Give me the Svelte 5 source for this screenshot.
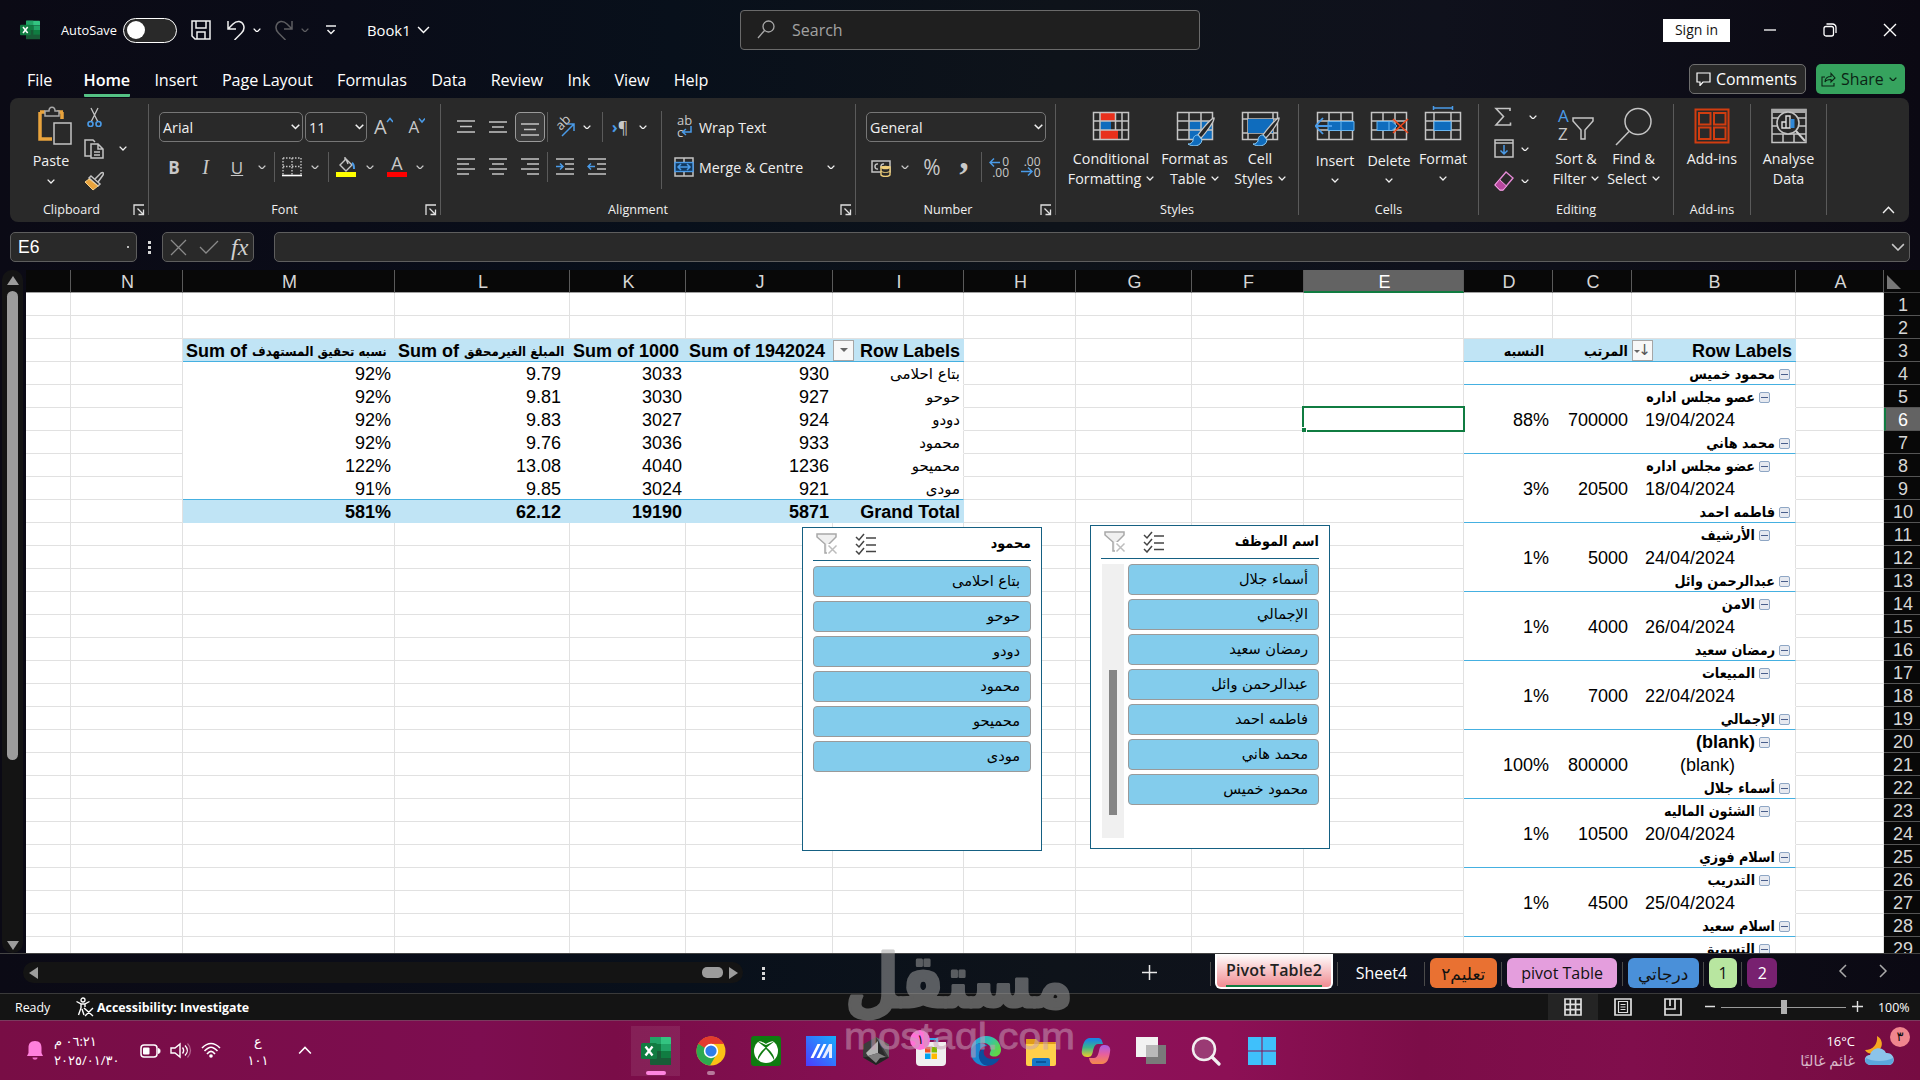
<script lang="ts">
  type Cell = { t: string; cls?: string; minus?: boolean; filter?: 'any' | 'sorted' }

  const tabs = ['File', 'Home', 'Insert', 'Page Layout', 'Formulas', 'Data', 'Review', 'Ink', 'View', 'Help']
  const cols = ['', 'N', 'M', 'L', 'K', 'J', 'I', 'H', 'G', 'F', 'E', 'D', 'C', 'B', 'A']
  const rows = Array.from({ length: 29 }, (_, i) => i + 1)

  const summary = [
    ['بتاع احلامى', '930', '3033', '9.79', '92%'],
    ['حوحو', '927', '3030', '9.81', '92%'],
    ['دودو', '924', '3027', '9.83', '92%'],
    ['محمود', '933', '3036', '9.76', '92%'],
    ['محميحو', '1236', '4040', '13.08', '122%'],
    ['مودى', '921', '3024', '9.85', '91%'],
  ]

  const staff = [
    ['محمود خميس', 'عصو مجلس اداره', '19/04/2024', '700000', '88%'],
    ['محمد هاني', 'عضو مجلس اداره', '18/04/2024', '20500', '3%'],
    ['فاطمه احمد', 'الأرشيف', '24/04/2024', '5000', '1%'],
    ['عبدالرحمن وائل', 'الامن', '26/04/2024', '4000', '1%'],
    ['رمضان سعيد', 'المبيعات', '22/04/2024', '7000', '1%'],
    ['الإجمالي', '(blank)', '(blank)', '800000', '100%'],
    ['أسماء جلال', 'الشئون الماليه', '20/04/2024', '10500', '1%'],
    ['اسلام فوزي', 'التدريب', '25/04/2024', '4500', '1%'],
    ['اسلام سعيد', 'التسويق', '', '', ''],
  ]

  const cells: Record<string, Cell> = {
    M3: { t: 'Sum of نسبه تحقيق المستهدف', cls: 'head' },
    L3: { t: 'Sum of المبلغ الغيرمحقق', cls: 'head' },
    K3: { t: 'Sum of 1000', cls: 'head' },
    J3: { t: 'Sum of 1942024', cls: 'head' },
    I3: { t: 'Row Labels', cls: 'bold', filter: 'any' },
    M10: { t: '581%', cls: 'bold' },
    L10: { t: '62.12', cls: 'bold wide' },
    K10: { t: '19190', cls: 'bold' },
    J10: { t: '5871', cls: 'bold' },
    I10: { t: 'Grand Total', cls: 'bold' },
    D3: { t: 'النسبه', cls: 'bold wide' },
    C3: { t: 'المرتب', cls: 'bold' },
    B3: { t: 'Row Labels', cls: 'bold', filter: 'sorted' },
  }
  summary.forEach((r, i) => {
    ;['I', 'J', 'K', 'L', 'M'].forEach((c, j) => (cells[c + (i + 4)] = { t: r[j], cls: c === 'L' ? 'wide' : '' }))
  })
  staff.forEach((r, i) => {
    const n = 4 + i * 3
    cells['B' + n] = { t: r[0], cls: 'bold lvl0', minus: true }
    cells['B' + (n + 1)] = { t: r[1], cls: 'bold lvl1', minus: true }
    cells['B' + (n + 2)] = { t: r[2], cls: 'lvl2' }
    cells['C' + (n + 2)] = { t: r[3] }
    cells['D' + (n + 2)] = { t: r[4] }
  })

  function look(c: string, r: number) {
    let s = ''
    if ('MLKJI'.includes(c) && c && r >= 3 && r <= 10) {
      s = r === 3 || r === 10 ? 'fill' : 'bare'
      if (r === 3 || r === 9) s += ' rule'
      if (c === 'I') s += ' last'
    } else if ('DCB'.includes(c) && c && r >= 3) {
      s = r === 3 ? 'fill' : 'bare'
      if (r === 3 || r % 3 === 1) s += ' rule'
      if (c === 'B') s += ' last'
    }
    return s
  }

  // split a label so arabic runs get their own face and size
  const runs = (t: string) => t.split(/([\u0600-\u06ff][\u0600-\u06ff ]*)/).filter(Boolean)
  const isAr = (t: string) => /[\u0600-\u06ff]/.test(t)

  const slicerA = ['بتاع احلامى', 'حوحو', 'دودو', 'محمود', 'محميحو', 'مودى']
  const slicerB = ['أسماء جلال', 'الإجمالي', 'رمضان سعيد', 'عبدالرحمن وائل', 'فاطمه احمد', 'محمد هاني', 'محمود خميس']

  const sheets = [
    { t: 'Pivot Table2', cls: 'active' },
    { t: 'Sheet4', cls: 'nocolor' },
    { t: 'تعليم٢', cls: 'orange' },
    { t: 'pivot Table', cls: 'pink' },
    { t: 'درجاتي', cls: 'blue' },
    { t: '1', cls: 'green' },
    { t: '2', cls: 'purple' },
  ]

  const g = 'fill="none" stroke="#c4c4c4" stroke-width="1.5"'
  const b = 'fill="none" stroke="#4a9be8" stroke-width="1.5"'
  const lines = (a: number[][]) => `<path ${g} d="${a.map(([x1, x2, y]) => `M${x1} ${y}H${x2}`).join('')}"/>`
  const brush = '<path d="M39 12c-3 0-14 14-16 17l3 3c3-3 14-17 13-20z" fill="#262626" stroke="#c8c8c8" stroke-width="1.3"/><path d="M23 29c-4 0-5 3-5 6-1 2-3 3-5 3 4 3 13 3 14-4z" fill="#0f6cbd" stroke="#8ccbf5"/>'

  const icons: Record<string, string> = {
    excel: '<path d="M10 1h19a1 1 0 0 1 1 1v6H9z" fill="#33c481"/><path d="M9 1h11v7H9z" fill="#21a366"/><path d="M9 8h11v7H9z" fill="#107c41"/><path d="M20 8h10v7H20z" fill="#21a366"/><path d="M9 15h21v14H10a1 1 0 0 1-1-1z" fill="#185c37"/><path d="M20 15h10v7H20z" fill="#107c41"/><rect x="0" y="7" width="16" height="16" rx="1.5" fill="#107c41"/><path d="M4.5 10.5l7 9M11.5 10.5l-7 9" stroke="#fff" stroke-width="2.3"/>',
    save: '<path d="M1 1h18v18H4l-3-3zM5 1v7h10V1M6 19v-7h8v7" fill="none" stroke="#f0f0f0" stroke-width="1.5"/>',
    undo: '<path d="M2 1v8h8M2 9l5-5c4-4 9-3 10.5 1s0 6-2 8l-7 7" fill="none" stroke="#f0f0f0" stroke-width="1.5"/>',
    redo: '<path d="M18 1v8h-8M18 9l-5-5C9 0 4 1 2.5 5s0 6 2 8l7 7" fill="none" stroke="#5d5d61" stroke-width="1.5"/>',
    custom: '<path d="M1 2h10M2.5 6L6 9.5 9.5 6" fill="none" stroke="#f0f0f0" stroke-width="1.5"/>',
    search: '<circle cx="11.5" cy="6.5" r="5.5" fill="none" stroke="#a8a8a8" stroke-width="1.3"/><path d="M7.5 10.5L1 18" stroke="#a8a8a8" stroke-width="1.3"/>',
    min: '<path d="M1 7h12" stroke="#fff" stroke-width="1.3"/>',
    restore: '<rect x="1" y="3.5" width="9.5" height="9.5" rx="2" fill="none" stroke="#fff" stroke-width="1.3"/><path d="M3.5 1h6a3.5 3.5 0 0 1 3.5 3.5v5.5" fill="none" stroke="#fff" stroke-width="1.3"/>',
    close: '<path d="M1 1l12 12M13 1L1 13" stroke="#fff" stroke-width="1.4"/>',
    comment: '<path d="M1 1h13v9H7l-3 3.5V10H1z" fill="none" stroke="#fff" stroke-width="1.2"/>',
    share: '<path d="M4 5H1v9h12v-3M4 10c0-4 3-5.5 6-5.5V1.5L14 6l-4 4V7.5C7 7.5 5 8 4 10z" fill="none" stroke="#0b2415" stroke-width="1.1"/>',
    paste: '<path d="M5 6v27h12M27 6v7M5 6h5M22 6h6" fill="none" stroke="#e8a33d" stroke-width="3.5"/><path d="M10 10V5h4c0-5 6-5 6 0h4v5z" fill="#292929" stroke="#a9a9a9" stroke-width="1.5"/><rect x="19" y="17" width="17" height="21" fill="#292929" stroke="#c4c4c4" stroke-width="1.5"/>',
    cut: '<path d="M5 1l7 14M12 1L5 15" stroke="#c4c4c4" stroke-width="1.3"/><circle cx="4.5" cy="17" r="2.5" fill="none" stroke="#4a9be8" stroke-width="1.6"/><circle cx="12.5" cy="17" r="2.5" fill="none" stroke="#4a9be8" stroke-width="1.6"/>',
    copy: `<path ${g} d="M7 17H1V1h8l2 2M7 5h7l5 5v9H7zM14 5v5h5M10 13h6M10 16h6"/>`,
    painter: '<path d="M11 8l6-6c2-1 3 0 2 2l-5 7" fill="none" stroke="#c4c4c4" stroke-width="1.5"/><path d="M7 5l9 8-2 2-9-8z" fill="none" stroke="#c4c4c4" stroke-width="1.5"/><path d="M5 8L1 11l8 8 5-4z" fill="#e8a33d" stroke="#f5d08a"/>',
    grow: '<path d="M14 5l3-3.5L20 5" fill="none" stroke="#4a9be8" stroke-width="1.5"/>',
    shrink: '<path d="M14 1.5L17 5l3-3.5" fill="none" stroke="#4a9be8" stroke-width="1.5"/>',
    border: '<path d="M1 1h18M1 1v17M19 1v17M10 1v17M1 9.5h18" fill="none" stroke="#c4c4c4" stroke-dasharray="1.5 1.5" stroke-width="1.4"/><path d="M0 18.5h20" stroke="#fff" stroke-width="1.6"/>',
    bucket: '<path d="M4 8l6-6 6 6-6 6zM9 3V0M10 2l2 5" fill="none" stroke="#c4c4c4" stroke-width="1.4"/><path d="M16 6c2 1 2 4 2 6" stroke="#4a9be8" stroke-width="2" fill="none"/><path d="M0 15h20v5H0z" fill="#ff0"/>',
    color: '<path d="M0 15h20v5H0z" fill="#f00"/>',
    top: lines([[1, 19, 4], [4, 16, 9.5], [1, 19, 15]]),
    mid: lines([[1, 19, 5], [4, 16, 10], [1, 19, 15]]),
    bot: lines([[1, 19, 7], [4, 16, 12.5], [1, 19, 18]]),
    left: lines([[1, 19, 2], [1, 13, 7], [1, 19, 12], [1, 13, 17]]),
    center: lines([[1, 19, 2], [4, 16, 7], [1, 19, 12], [4, 16, 17]]),
    right: lines([[1, 19, 2], [7, 19, 7], [1, 19, 12], [7, 19, 17]]),
    indent: lines([[1, 19, 2], [10, 19, 7], [10, 19, 12], [1, 19, 17]]) + `<path ${b} d="M1 9.5h7M5 6.5l3 3-3 3"/>`,
    outdent: lines([[1, 19, 2], [10, 19, 7], [10, 19, 12], [1, 19, 17]]) + `<path ${b} d="M8 9.5H1M4 6.5l-3 3 3 3"/>`,
    orient: `<path ${b} d="M7 19L19 7M12 7h7v7"/>`,
    wrap: `<path ${b} d="M17 9v6H9M12 12l-3.5 3 3.5 3"/>`,
    merge: `<rect x="1" y="1" width="18" height="18" ${g}/><path ${g} d="M10 1v4M10 15v4"/><rect x="1" y="5.5" width="18" height="9" fill="#12395e" stroke="#4a9be8" stroke-width="1.4"/><path ${b} d="M4 10h12M7 7l-3 3 3 3M13 7l3 3-3 3"/>`,
    money: `<rect x="1" y="4" width="18" height="11" ${g}/><path ${g} d="M7 7c-4-1-4 6 0 5M13 7c-4-1-4 6 0 5"/><path d="M10 10v8c2 2 7 2 9 0v-8z" fill="#292929" stroke="#f0cf7a" stroke-width="1.4"/><ellipse cx="14.5" cy="10.5" rx="4.5" ry="1.8" fill="#f0cf7a"/><path d="M10 14c2 2 7 2 9 0" fill="none" stroke="#f0cf7a"/>`,
    inc: `<path ${b} d="M11 5.5H1M5 1.5L1 5.5l4 4"/>`,
    dec: `<path ${b} d="M0 14.5h11M7 10.5l4 4-4 4"/>`,
    cf: `<path d="M9 6.5h16V15H9zM9 24h18v9.5H9z" fill="#e8301c"/><path d="M9 15h11v9H9z" fill="#0f6cbd"/><path ${g} d="M2.5 6.5h35v27h-35zM9 6.5v27M31 6.5v27M24.5 6.5V24M2.5 15h35M2.5 24h35"/>`,
    fat: `<path d="M14 15h24v19H14z" fill="#0f6cbd"/><path ${g} d="M2.5 6.5h35v27h-35zM14 6.5v27M26 6.5v27M2.5 15h35M2.5 24h35"/>${brush}`,
    cell: `<path ${g} d="M2.5 6.5h35v27h-35zM2.5 13h35M2.5 27h35M8 6.5v27M33 6.5v27"/><path d="M8 13h25v14H8z" fill="#0f6cbd"/>${brush}`,
    insert: `<path ${g} d="M2.5 6.5h35v27h-35zM14 6.5v27M26 6.5v27M2.5 15h35M2.5 24h35"/><path d="M13 15.5h26v9H13z" fill="#0f6cbd" stroke="#69b6f0"/><path d="M26 15v10" stroke="#69b6f0"/><path d="M8 12l-7.5 8L8 28M1 20h16" fill="none" stroke="#4a9be8" stroke-width="1.8"/>`,
    del: `<path ${g} d="M2.5 6.5h35v27h-35zM14 6.5v27M26 6.5v27M2.5 15h35M2.5 24h35"/><path d="M8 15.5h15l5 4.5-5 4.5H8z" fill="#0f6cbd" stroke="#69b6f0"/><path d="M20 15v10" stroke="#69b6f0"/><path d="M24 13l15 14M39 13L24 27" stroke="#f0481c" stroke-width="1.6"/>`,
    format: `<path ${g} d="M2.5 6.5h35v27h-35zM11 6.5v27M28 6.5v27M2.5 15h35M2.5 24h35"/><path d="M11 15.5h17v9H11z" fill="#0f6cbd" stroke="#69b6f0"/><path ${b} d="M10.5 2h19M10.5 0v4M29.5 0v4"/>`,
    sigma: '<path d="M16 4V1.5H2L9.5 9.5 2 18h14.5v-2.5" fill="none" stroke="#c4c4c4" stroke-width="1.6"/>',
    down: `<path ${g} d="M1 1h18v17H1zM1 4h18"/><path ${b} d="M10 6v9M6.5 11.5L10 15l3.5-3.5"/>`,
    eraser: '<path d="M12 1l7 6-10 12H6l-5-5z" fill="none" stroke="#e58ad6" stroke-width="1.4"/><path d="M5.5 8.5l7 6.5L9 19H6l-5-5z" fill="#b8489f" stroke="#f0a0e0"/>',
    sort: `<path ${g} d="M17 12h20v3l-8 9v9h-4v-9l-8-9z"/>`,
    find: `<circle cx="24" cy="15.5" r="13" ${g}/><path ${g} d="M15 25.5L2 39"/>`,
    addins: '<path d="M3.5 3.5h33v33h-33zM7 7h11.5v11.5H7zM22 7h11.5v11.5H22zM7 21.5h11.5V33H7zM22 21.5h11.5V33H22z" fill="none" stroke="#d13d10" stroke-width="2"/>',
    analyse: `<path ${g} d="M3 3.5h34v33H3zM3 28h34M3 20h34M3 12h34M14 28v8M25 28v8"/><path d="M3 3h34v4H3z" fill="#a8a8a8"/><circle cx="19" cy="17" r="11" fill="#292929" stroke="#c4c4c4" stroke-width="1.6"/><path d="M27 25l9 10" stroke="#d0d0d0" stroke-width="2"/><path d="M17 10h4v12h-4zM13 16h4v6h-4z" fill="none" stroke="#e0e0e0" stroke-width="1.4"/><path d="M21.5 13h4v9h-4z" fill="#2f88d8"/>`,
    x: '<path d="M1 1l15 15M16 1L1 16" stroke="#8a8a8a" stroke-width="1.3"/>',
    check: '<path d="M1 8l6 6L19 2" fill="none" stroke="#8a8a8a" stroke-width="1.3"/>',
    access: '<circle cx="8" cy="3" r="2" fill="none" stroke="#fff" stroke-width="1.3"/><path d="M1.5 4.5L6 7v4L3.5 18M14.5 4.5L10 7v3M6 7h4M7 12l2 6M9 11l9 8M18 11l-8 8" fill="none" stroke="#fff" stroke-width="1.4"/>',
    normal: '<path d="M1 1h16v16H1zM1 6.3h16M1 11.6h16M6.3 1v16M11.6 1v16" fill="none" stroke="#e0e0e0" stroke-width="1.7"/>',
    page: '<path d="M1 1h16v16H1z" fill="none" stroke="#e0e0e0" stroke-width="1.7"/><path d="M4.5 3.5h9v11h-9zM6.5 6.5h5M6.5 9h5M6.5 11.5h5" fill="none" stroke="#e0e0e0" stroke-width="1.2"/>',
    brk: '<path d="M1 1h16v16H1zM1 11h10V1M6 1v7" fill="none" stroke="#e0e0e0" stroke-width="1.7"/>',
    funnel: '<path d="M1 1h19v3l-7 7v9H9v-9L1 4z" fill="#f0f0f0" stroke="#a8a8a8" stroke-width="1.5"/><path d="M11 11h10v10H11z" fill="#fff"/><path d="M12.5 12.5l8 8M20.5 12.5l-8 8" stroke="#bdbdbd" stroke-width="1.5"/>',
    multi: '<path d="M1 4l3 3 5-6M1 11l3 3 5-6M1 18l3 3 5-6M11 5h10M11 12h10M11 18.5h10" fill="none" stroke="#444" stroke-width="1.5"/>',
    bell: '<path d="M9 1c5 0 6.5 3 6.5 7v5L17 16H1l1.5-3V8C2.5 4 4 1 9 1z" fill="#ff80dc"/><path d="M6.5 17.5h5c0 3-5 3-5 0z" fill="#f06cc8"/>',
    battery: '<rect x="1" y="2" width="16" height="12" rx="3" fill="none" stroke="#fff" stroke-width="1.5"/><rect x="3" y="4.5" width="6.5" height="7" rx="1" fill="#fff"/><path d="M18.5 5.5c2 0 2 5 0 5z" fill="#fff" stroke="#fff"/>',
    sound: '<path d="M1 6v5h4l5 4V2L5 6z" fill="none" stroke="#fff" stroke-width="1.4"/><path d="M12.5 5.5c1.5 2 1.5 4 0 6M15 3.5c3 3 3 7 0 10" fill="none" stroke="#fff" stroke-width="1.4"/><path d="M17.5 1.5c4 4 4 10 0 14" fill="none" stroke="#b0608c" stroke-width="1.3"/>',
    wifi: '<path d="M1 6c6-6 12-6 18 0M3.5 9c5-5 8-5 13 0M6 12c3-3.5 5-3.5 8 0" fill="none" stroke="#fff" stroke-width="1.6"/><circle cx="10" cy="14" r="1.8" fill="#fff"/>',
    weather: '<path d="M13 0c6 3 8 13-3 17-5 1-7 0-9-3 8 0 13-6 12-14z" fill="#f6a821"/><path d="M7 29c-8 0-8-10-1-10 2-8 13-9 16-2 9-1 11 12 2 12z" fill="#8cc4ea"/><path d="M7 29c-5 0-7-4-5-7 6 4 20 4 27 0 1 4-1 7-5 7z" fill="#5ba7dd"/>',
    chrome: '<circle cx="15" cy="15" r="14.5" fill="#fbc116"/><path d="M15 15L2.4 7.8A14.5 14.5 0 0 1 27.6 7.8H15z" fill="#e33b2e"/><path d="M15 15L2.4 7.8A14.5 14.5 0 0 0 14 29.5l7-12z" fill="#2da94f"/><path d="M2.4 7.8A14.5 14.5 0 0 1 27.6 7.8H15a7 7 0 0 0-6.5 4z" fill="#e33b2e"/><circle cx="15" cy="15" r="7.2" fill="#fff"/><circle cx="15" cy="15" r="5.6" fill="#2f7de9"/>',
    xbox: '<rect width="30" height="30" rx="3" fill="#0f7b10"/><circle cx="15" cy="15" r="12" fill="#fff"/><path d="M7 5c4 0 8 3 8 3s4-3 8-3c-4-4-12-4-16 0zM15 11c6 5 9 10 8 13-2-4-5-8-8-11-3 3-6 7-8 11-1-3 2-8 8-13z" fill="#0f7b10"/><path d="M6 5l9 7 9-7-9 4z" fill="#0f7b10"/>',
    armoury: '<defs><linearGradient id="mb" x1="1" y1="0" x2="0" y2="1"><stop offset="0" stop-color="#16aefc"/><stop offset="1" stop-color="#4d3bff"/></linearGradient></defs><rect width="30" height="30" fill="url(#mb)"/><path d="M4.5 22l7-14h3l-7 14zM10.5 22l7-14h3l-7 14z" fill="#fff"/><path d="M16 22l7-14h3v14h-3v-7l-4 7z" fill="#e6ecff"/>',
    cube: '<path d="M15 1l13 7.5v13L15 29 2 21.5v-13z" fill="#3c3c3c"/><path d="M15 1l13 7.5v13L22 12z" fill="#6a6a6a"/><path d="M2 21.5L15 29l13-7.5-13-2z" fill="#232323"/><path d="M17 5L5 17l2 3 10-3z" fill="#b4b4b4"/><path d="M17 5v12l8 4z" fill="#2a2a2a"/><path d="M7 20l10-3 8 4-6 1-4 5z" fill="#808080"/>',
    store: '<path d="M9 8V3h12v5" fill="none" stroke="#35a7ec" stroke-width="2.2"/><path d="M0 6h30v20a4 4 0 0 1-4 4H4a4 4 0 0 1-4-4z" fill="#f0eef0"/><path d="M9 11h5.5v5.5H9z" fill="#f25022"/><path d="M15.5 11H21v5.5h-5.5z" fill="#7fba00"/><path d="M9 17.5h5.5V23H9z" fill="#00a4ef"/><path d="M15.5 17.5H21V23h-5.5z" fill="#ffb900"/>',
    edge: '<defs><linearGradient id="ed" x1="0" y1="0" x2="1" y2=".5"><stop offset=".2" stop-color="#2aa5dc"/><stop offset=".6" stop-color="#34c3a8"/><stop offset="1" stop-color="#5fd64a"/></linearGradient></defs><path d="M0 14C1-4 28-5 30 13c.5 8-8 9-11 6-1-2 1-3 1-6 0-5-9-9-15-4-3 2-4 4-5 5z" fill="url(#ed)"/><path d="M0 15C2 7 12 5 16 10c-6 0-9 5-7 11 2 5 6 8 8 9C6 31-1 23 0 15z" fill="#1b86d0"/><path d="M14 12c-4 6 1 14 15 10-4 7-11 9-16 7-7-4-7-15 1-17z" fill="#0c4f9e"/>',
    folder: '<path d="M0 3h10l3 3h17v6H0z" fill="#e09c1a"/><path d="M0 8h30v20a2 2 0 0 1-2 2H2a2 2 0 0 1-2-2z" fill="#ffcf4a"/><path d="M6 30v-6a2 2 0 0 1 2-2h14a2 2 0 0 1 2 2v6z" fill="#1778c8"/><path d="M10 25h10v2H10z" fill="#0a559c"/>',
    copilot: '<defs><linearGradient id="ca" x1="0" y1="0" x2="0" y2="1"><stop offset=".1" stop-color="#1c86e0"/><stop offset=".5" stop-color="#3bb58a"/><stop offset="1" stop-color="#f2cb2a"/></linearGradient><linearGradient id="cb" x1="0" y1="0" x2="0" y2="1"><stop offset="0" stop-color="#a95be6"/><stop offset=".5" stop-color="#e8609c"/><stop offset="1" stop-color="#f58a4a"/></linearGradient></defs><path d="M9 2h8c3 0 4 2 5 6h-5c-3 0-4 3-5 7-1 5-2 6-6 6-4 0-6-3-5-7C2 7 4 2 9 2z" fill="url(#ca)"/><path d="M21 28h-8c-3 0-4-2-5-6h5c3 0 4-3 5-7 1-5 2-6 6-6 4 0 6 3 5 7-1 7-3 12-8 12z" fill="url(#cb)"/>',
    taskview: '<rect x="10" y="9" width="20" height="19" fill="#7a7a7a"/><rect x="0" y="1" width="22" height="20" fill="#f2f2f2"/><path d="M10 9h12v12H10z" fill="#b9b9b9"/>',
    lens: '<circle cx="13" cy="13" r="11" fill="#9a3a74" stroke="#f2eef0" stroke-width="2.5"/><path d="M21 21l7 7" stroke="#f2eef0" stroke-width="3.2" stroke-linecap="round"/>',
    windows: '<path d="M1 1h13.5v13.5H1zM15.5 1H29v13.5H15.5zM1 15.5h13.5V29H1zM15.5 15.5H29V29H15.5z" fill="#3fc0fb"/>',
  }
  const dock = ['excel', 'chrome', 'xbox', 'armoury', 'cube', 'store', 'edge', 'folder', 'copilot', 'taskview', 'lens', 'windows']
</script>

{#snippet icon(name: string, w: number, h: number)}
  <svg class="ico" width={w} height={h} viewBox="0 0 {w} {h}">{@html icons[name]}</svg>
{/snippet}

{#snippet chev(w = 9, up = false)}
  <svg class="chev" width={w} height={w * 0.62} viewBox="0 0 10 6.2"><path d={up ? 'M.8 5.4L5 1l4.2 4.4' : 'M.8.8L5 5 9.2.8'} fill="none" stroke="currentColor" stroke-width={w > 10 ? 1.1 : 1.7} /></svg>
{/snippet}

{#snippet label(text: string, launcher = true)}
  <div class="label" class:launcher>
    <span>{text}</span>
    {#if launcher}
      <svg width="12" height="12" viewBox="0 0 12 12"><path d="M1 11V1h10M4.5 4.5l6 6M10.5 5.5v5h-5" fill="none" stroke="#e0e0e0" stroke-width="1.3" /></svg>
    {/if}
  </div>
{/snippet}

{#snippet big(name: string, a: string, bb: string, drop = true)}
  <div class="big">
    {@render icon(name, 40, 40)}
    <span>{a}</span>
    <span>{bb}{#if drop}<i>{@render chev(8)}</i>{/if}</span>
  </div>
{/snippet}

{#snippet mixed(t: string)}
  {#each runs(t) as run}{#if isAr(run)}<span class="ar">{run}</span>{:else}{run}{/if}{/each}
{/snippet}

{#snippet slicer(title: string, items: string[], scroll: boolean)}
  <div class="slicer-head">
    {@render icon('funnel', 22, 22)}
    {@render icon('multi', 22, 22)}
    <b class="ar">{title}</b>
  </div>
  <div class="slicer-body">
    {#if scroll}<div class="slicer-track"><div class="slicer-thumb"></div></div>{/if}
    <div class="slicer-items">
      {#each items as it}<div class="slicer-item ar">{it}</div>{/each}
    </div>
  </div>
{/snippet}

<div class="app">
  <header class="title">
    <span class="logo"><svg width="20" height="20" viewBox="0 0 30 30">{@html icons.excel}</svg></span>
    <span class="autosave">AutoSave</span>
    <span class="toggle"></span>
    <span class="save">{@render icon('save', 20, 20)}</span>
    <span class="undo">{@render icon('undo', 20, 20)}{@render chev(8)}</span>
    <span class="redo">{@render icon('redo', 20, 20)}{@render chev(8)}</span>
    <span class="custom">{@render icon('custom', 12, 12)}</span>
    <span class="book">Book1 {@render chev(13)}</span>
    <div class="search">{@render icon('search', 18, 19)}<span>Search</span></div>
    <div class="window">
      <button class="signin">Sign in</button>
      {@render icon('min', 14, 14)}
      {@render icon('restore', 14, 14)}
      {@render icon('close', 14, 14)}
    </div>
  </header>

  <nav class="tabs">
    {#each tabs as t}<span class="tab" class:on={t === 'Home'}>{t}</span>{/each}
    <div class="actions">
      <span class="comments">{@render icon('comment', 15, 14)}Comments</span>
      <span class="share">{@render icon('share', 15, 15)}Share {@render chev(8)}</span>
    </div>
  </nav>

  <section class="ribbon">
    <div class="group clip">
      <div class="body">
        <div class="big paste">{@render icon('paste', 40, 40)}<span>Paste</span>{@render chev(8)}</div>
        <div class="small">
          {@render icon('cut', 17, 20)}{@render icon('copy', 20, 20)}{@render icon('painter', 20, 20)}
        </div>
        <div class="drop">{@render chev(8)}</div>
      </div>
      {@render label('Clipboard')}
    </div>

    <div class="group font">
      <div class="body rows">
        <div class="row f1">
          <div class="combo"><span>Arial</span>{@render chev(9)}</div>
          <div class="combo two"><span>11</span>{@render chev(9)}</div>
          <span class="aa">A{@render icon('grow', 20, 7)}</span>
          <span class="aa less">A{@render icon('shrink', 20, 7)}</span>
        </div>
        <div class="row f2">
          <b>B</b><em>I</em><u>U</u>{@render chev(8)}<i class="sep"></i>
          {@render icon('border', 20, 20)}{@render chev(8)}<i class="sep"></i>
          {@render icon('bucket', 20, 20)}{@render chev(8)}
          <span class="fc"><span>A</span>{@render icon('color', 20, 20)}</span>{@render chev(8)}
        </div>
      </div>
      {@render label('Font')}
    </div>

    <div class="group align">
      <div class="body">
        <div class="rows">
          <div class="row a1">
            {@render icon('top', 20, 20)}{@render icon('mid', 20, 20)}
            <span class="pressed">{@render icon('bot', 20, 20)}</span><i class="sep"></i>
            <span class="orient"><small>ab</small>{@render icon('orient', 20, 20)}</span>{@render chev(8)}<i class="sep"></i>
            <span class="para"><b>›</b>¶</span>{@render chev(8)}
          </div>
          <div class="row a2">
            {@render icon('left', 20, 20)}{@render icon('center', 20, 20)}{@render icon('right', 20, 20)}<i class="sep"></i>
            {@render icon('indent', 20, 20)}{@render icon('outdent', 20, 20)}
          </div>
        </div>
        <i class="sep tall"></i>
        <div class="rows wraps">
          <div class="row"><span class="wrapico"><small>ab<br />c</small>{@render icon('wrap', 20, 20)}</span>Wrap Text</div>
          <div class="row">{@render icon('merge', 20, 20)}<span class="mc">Merge &amp; Centre</span>{@render chev(8)}</div>
        </div>
      </div>
      {@render label('Alignment')}
    </div>

    <div class="group number">
      <div class="body rows">
        <div class="row"><div class="combo gen"><span>General</span>{@render chev(9)}</div></div>
        <div class="row n2">
          {@render icon('money', 20, 20)}{@render chev(8)}<span class="pct">%</span><span class="comma">,</span><i class="sep"></i>
          <span class="dp"><small>0<br />.00</small>{@render icon('inc', 20, 20)}</span>
          <span class="dp"><small>.00<br />0</small>{@render icon('dec', 20, 20)}</span>
        </div>
      </div>
      {@render label('Number')}
    </div>

    <div class="group styles">
      <div class="body">
        {@render big('cf', 'Conditional', 'Formatting')}{@render big('fat', 'Format as', 'Table')}{@render big('cell', 'Cell', 'Styles')}
      </div>
      {@render label('Styles', false)}
    </div>

    <div class="group cellsg">
      <div class="body">
        {@render big('insert', 'Insert', '')}{@render big('del', 'Delete', '')}{@render big('format', 'Format', '')}
      </div>
      {@render label('Cells', false)}
    </div>

    <div class="group editing">
      <div class="body">
        <div class="edits">
          <div class="first">{@render icon('sigma', 20, 20)}{@render chev(8)}</div>
          <div>{@render icon('down', 20, 20)}{@render chev(8)}</div>
          <div>{@render icon('eraser', 20, 20)}{@render chev(8)}</div>
        </div>
        <div class="big sortbig">
          <span class="az">A<br />Z</span>
          {@render icon('sort', 40, 40)}
          <span>Sort &amp;</span><span>Filter<i>{@render chev(8)}</i></span>
        </div>
        {@render big('find', 'Find &', 'Select')}
      </div>
      {@render label('Editing', false)}
    </div>

    <div class="group addins">
      <div class="body">{@render big('addins', 'Add-ins', '', false)}</div>
      {@render label('Add-ins', false)}
    </div>

    <div class="group analyse">
      <div class="body">{@render big('analyse', 'Analyse', 'Data', false)}</div>
    </div>
    <span class="collapse">{@render chev(13, true)}</span>
  </section>

  <section class="formula">
    <div class="name">E6<i></i></div>
    <span class="dots"></span>
    <div class="fx">{@render icon('x', 17, 17)}{@render icon('check', 20, 16)}<em>fx</em></div>
    <div class="input">{@render chev(14)}</div>
  </section>

  <main class="sheet">
    <div class="vscroll"><i class="up"></i><div class="vthumb"></div><i class="down"></i></div>
    <div class="grid">
      <div class="line header">
        {#each cols as c}<div class="ch" class:sel={c === 'E'}>{c}</div>{/each}
        <div class="corner"><i></i></div>
      </div>
      {#each rows as r}
        <div class="line">
          {#each cols as c}
            {@const cell = c ? cells[c + r] : undefined}
            <div class="cell {look(c, r)} {cell?.cls ?? ''}">
              {#if cell}
                {#if cell.filter}<span class="filter {cell.filter}">{#if cell.filter === 'sorted'}↓{/if}</span>{/if}
                <span class="txt">{@render mixed(cell.t)}</span>
                {#if cell.minus}<span class="minus"></span>{/if}
              {/if}
            </div>
          {/each}
          <div class="rh" class:sel={r === 6}>{r}</div>
        </div>
      {/each}
    </div>
    <div class="cursor"></div>
    <div class="slicer one">{@render slicer('محمود', slicerA, false)}</div>
    <div class="slicer two">{@render slicer('اسم الموظف', slicerB, true)}</div>
  </main>

  <section class="sheetbar">
    <div class="hscroll"><i class="l"></i><span></span><i class="r"></i></div>
    <span class="dots"></span>
    <svg class="plus" width="15" height="15" viewBox="0 0 15 15"><path d="M7.5 0v15M0 7.5h15" stroke="#e8e8e8" stroke-width="1.5" /></svg>
    <div class="sheets">
      {#each sheets as s}<i class="tsep"></i><span class="st {s.cls}"><span>{s.t}</span></span>{/each}
    </div>
    <svg class="nav" width="50" height="14" viewBox="0 0 50 14"><path d="M8 1L2 7l6 6M42 1l6 6-6 6" fill="none" stroke="#aaa" stroke-width="1.5" /></svg>
  </section>

  <footer class="status">
    <span class="ready">Ready</span>
    {@render icon('access', 19, 20)}
    <b>Accessibility: Investigate</b>
    <div class="views">
      <span class="on">{@render icon('normal', 18, 18)}</span>
      <span>{@render icon('page', 18, 18)}</span>
      <span>{@render icon('brk', 18, 18)}</span>
    </div>
    <svg class="zoom" width="160" height="16" viewBox="0 0 160 16"><path d="M1 7.5h10M148 7.5h11M153.5 2v11" stroke="#e0e0e0" stroke-width="1.4" /><path d="M17 8.5h125" stroke="#9a9a9a" /><path d="M77 1h6v14h-6z" fill="#b0b0b0" /></svg>
    <span class="pc">100%</span>
  </footer>

  <section class="taskbar">
    <div class="tray">
      {@render icon('bell', 18, 21)}
      <div class="clock"><span dir="rtl">٠٦:٢١ م</span><span>٢٠٢٥/٠١/٣٠</span></div>
      {@render icon('battery', 21, 16)}
      {@render icon('sound', 22, 17)}
      {@render icon('wifi', 20, 17)}
      <div class="lang"><span>ع</span><span>١٠١</span></div>
      {@render chev(14, true)}
    </div>
    <div class="dock">
      {#each dock as d, i}
        <div class="tile" class:open={i === 0} class:run={i === 1}>
          {@render icon(d, 30, 30)}
          {#if d === 'store'}<span class="note">١</span>{/if}
        </div>
      {/each}
    </div>
    <div class="weather">
      <div class="temp"><span>16°C</span><span class="sky">غائم غالبًا</span></div>
      {@render icon('weather', 31, 30)}
      <span class="alert">٣</span>
    </div>
  </section>

  <svg class="mark" width="240" height="130" viewBox="0 0 240 130">
    <text class="mark-ar" x="6" y="67" textLength="228" lengthAdjust="spacingAndGlyphs">مستقل</text>
    <text class="mark-en" x="5" y="109" textLength="231" lengthAdjust="spacingAndGlyphs">mostaql.com</text>
  </svg>
</div>

<style>
  :global(body) { background: #0b0d18; overflow: hidden; }
  .app {
    position: relative;
    width: 1920px;
    height: 1080px;
    overflow: hidden;
    display: flex;
    flex-direction: column;
    background: linear-gradient(90deg, #0b0a15 0, #0a0c18 18%, #08101b 35%, #0e131a 55%, #0f111c 75%, #0b0913 100%);
    color: #fff;
    font-family: 'Open Sans', 'Noto Sans', 'DejaVu Sans', sans-serif;
    font-size: 14.5px;
    white-space: nowrap;
  }
  .app :global(svg) { display: block; flex: none; }
  i { font-style: normal; }
  .ar { font-family: 'DejaVu Sans', sans-serif; }

  /* title bar */
  .title { height: 60px; display: flex; align-items: center; flex: none; }
  .title > span { display: flex; align-items: center; flex: none; }
  .logo { margin-left: 20px; width: 41px; }
  .autosave { width: 62px; font-size: 12.8px; }
  .toggle { width: 52px; height: 23px; border: 1px solid #fff; border-radius: 13px; background: #292929; }
  .toggle::before { content: ''; width: 18px; height: 18px; margin-left: 3px; border-radius: 50%; background: #fff; }
  .save { margin-left: 14px; width: 35px; }
  .undo, .redo { width: 48px; gap: 7px; }
  .redo { color: #5d5d61; width: 51px; }
  .custom { width: 42px; }
  .book { width: 373px; font-size: 14.8px; gap: 6px; }
  .search {
    box-sizing: border-box;
    width: 460px;
    height: 40px;
    border: 1px solid #6a6a6a;
    border-radius: 4px;
    background: #1f1f1f;
    color: #a2a2a2;
    display: flex;
    align-items: center;
    gap: 17px;
    padding: 0 0 1px 16px;
    font-size: 16px;
  }
  .window { margin-left: 463px; display: flex; align-items: center; gap: 46px; }
  .signin { border: 0; padding: 0; margin-right: -13px; width: 67px; height: 23px; background: #fff; color: #111; font: 14px/22px 'Open Sans', sans-serif; }

  /* tabs */
  .tabs { height: 38px; display: flex; align-items: center; padding-left: 27px; gap: 24.3px; font-size: 16.2px; flex: none; }
  .tab { line-height: 36px; height: 35px; box-sizing: border-box; letter-spacing: -0.08px; }
  .tab:first-child { margin-right: 7px; }
  .tab.on { font-weight: 600; border-bottom: 3px solid #54c184; border-radius: 1px; }
  .actions { margin-left: auto; margin-right: 15px; display: flex; gap: 10px; }
  .comments, .share { box-sizing: border-box; height: 30px; border-radius: 5px; display: flex; align-items: center; padding: 0 6px; gap: 5px; }
  .comments { width: 117px; background: #292929; border: 1px solid #6e6e6e; font-size: 15.9px; }
  .share { width: 89px; background: #36a35e; color: #0b2415; font-size: 15.9px; padding: 0 5px; }

  /* ribbon */
  .ribbon { height: 124px; margin: 0 11px 0 10px; background: #292929; border-radius: 8px; display: flex; align-items: flex-start; flex: none; color: #f0f0f0; }
  .group { box-sizing: border-box; height: 111px; margin-top: 6px; border-right: 1px solid #5a5a5a; flex: none; }
  .body { height: 95px; display: flex; }
  .rows { display: flex; flex-direction: column; gap: 10px; padding-top: 8px; }
  .row { height: 30px; display: grid; align-items: center; justify-items: center; }
  .label { height: 22px; line-height: 22px; font-size: 12.6px; text-align: center; display: grid; grid-template-columns: 1fr; align-items: center; }
  .label.launcher { grid-template-columns: 1fr 15px; }
  .font .label span, .align .label span { margin-right: 5px; }
  .sep { width: 1px; height: 30px; background: #5a5a5a; }
  .combo { box-sizing: border-box; height: 30px; width: 144px; border: 1px solid #767676; border-radius: 5px; display: flex; align-items: center; justify-content: space-between; padding: 0 2px 0 3px; font-size: 14.3px; }
  .combo.two { width: 62px; margin-left: 2px; }
  .combo.gen { width: 180px; }
  .big { display: flex; flex-direction: column; align-items: center; line-height: 20px; padding-top: 2px; font-size: 14.3px; position: relative; }
  .big .ico { margin-bottom: 3px; }
  .big span i { display: inline-block; margin-left: 5px; vertical-align: 3px; }

  .clip { width: 139px; }
  .clip .body { padding-left: 17px; }
  .paste { width: 55px; }
  .paste > :global(.chev) { margin: 8px 7px 0 0; }
  .paste span { margin: 2px 7px 0 0; }
  .small { width: 24px; display: flex; flex-direction: column; align-items: center; gap: 12px; padding-top: 3px; }
  .drop { width: 35px; padding: 42px 0 0 13px; box-sizing: border-box; }

  .font { width: 292px; }
  .font .body { padding-left: 10px; height: 87px; }
  .f1 { grid-template-columns: 144px 64px 34px 32px; }
  .f2 { grid-template-columns: 30px 33px 30px 19px 6px 29px 18px 8px 28px 20px 34px 12px; font-size: 17px; color: #c8c8c8; }
  .f2 em { font-family: 'Liberation Serif', serif; font-size: 20px; }
  .aa { position: relative; font-size: 20px; color: #c8c8c8; line-height: 30px; width: 20px; }
  .aa.less { font-size: 17px; width: 17px; }
  .aa .ico { position: absolute; left: -1px; top: 5px; }
  .aa.less .ico { left: -4px; }
  .fc { position: relative; width: 20px; height: 20px; text-align: center; line-height: 12px; font-size: 18px; }
  .fc .ico { position: absolute; left: 0; top: 0; }

  .align { width: 415px; }
  .align .rows { width: 205px; margin-left: 10px; }
  .a1 { grid-template-columns: 30px 34px 30px 5px 30px 14px 16px 20px 26px; }
  .a2 { grid-template-columns: 30px 34px 30px 5px 30px 34px; justify-content: start; }
  .pressed { box-sizing: border-box; width: 30px; height: 30px; border: 1px solid #9a9a9a; border-radius: 5px; background: #3a3a3a; display: grid; place-items: center; }
  .orient, .wrapico, .dp { position: relative; width: 20px; height: 20px; display: block; }
  .orient small { position: absolute; left: 0; top: -4px; font-size: 13px; color: #c8c8c8; transform: rotate(-45deg); }
  .para { font-size: 16px; color: #c8c8c8; }
  .para b { color: #4a9be8; }
  .sep.tall { height: 78px; margin: 7px 0 0 5px; }
  .align .wraps { width: 180px; margin-left: 12px; }
  .wraps .row { display: flex; font-size: 14.2px; }
  .wrapico { margin-right: 5px; flex: none; }
  .wrapico small { position: absolute; left: 3px; top: -3px; font-size: 13px; line-height: 12px; color: #c8c8c8; }
  .wraps .row > .ico { margin-right: 5px; }
  .mc { width: 128px; }

  .number { width: 200px; }
  .number .body { padding-left: 10px; height: 87px; }
  .number .row { justify-items: start; }
  .number .n2 { grid-template-columns: 30px 18px 36px 28px 7px 28px 35px; justify-items: center; color: #c8c8c8; }
  .pct { font-size: 21px; }
  .comma { font: bold 38px/10px 'Liberation Serif', serif; margin-top: -22px; }
  .dp small { position: absolute; right: 0; top: -1px; font: 12px/11px 'Open Sans', sans-serif; text-align: right; }

  .styles { width: 243px; }
  .styles .body { padding-left: 10px; display: grid; grid-template-columns: 90px 77px 54px; }
  .cellsg { width: 180px; }
  .cellsg .body { padding-left: 9px; display: grid; grid-template-columns: 54px 54px 54px; }
  .cellsg .big span i { margin-left: 0; }
  .cellsg .big:not(:last-child) .ico { margin-bottom: 5px; }
  .editing { width: 195px; }
  .editing .body { padding-left: 9px; display: grid; grid-template-columns: 58px 60px 55px; }
  .edits { padding: 3px 0 0 6px; display: flex; flex-direction: column; gap: 12px; }
  .edits div { display: flex; align-items: center; gap: 7px; }
  .edits .first { gap: 15px; }
  .az { position: absolute; left: 12px; top: 3px; font-size: 17px; line-height: 18px; color: #c8c8c8; }
  .az::first-line { color: #4a9be8; }
  .addins { width: 77px; }
  .analyse { width: 76px; }
  .addins .body, .analyse .body { justify-content: center; }
  .collapse { margin: 108px 0 0 55px; }

  /* formula bar */
  .formula { height: 48px; padding: 10px 10px 0 10px; box-sizing: border-box; display: flex; align-items: flex-start; flex: none; }
  .formula > div { box-sizing: border-box; height: 30px; border: 1px solid #5e5e5e; border-radius: 5px; background: #292929; display: flex; align-items: center; }
  .name { width: 127px; padding: 0 7px; justify-content: space-between; font: 17.5px 'Liberation Sans', sans-serif; }
  .name i { width: 2px; height: 2px; background: #bbb; }
  .dots { width: 3px; height: 13px; background: repeating-linear-gradient(#d8d8d8 0 3px, transparent 3px 5px); flex: none; }
  .formula .dots { margin: 9px 11px 0 11px; }
  .fx { width: 92px; padding-left: 7px; gap: 12px; }
  .fx em { font: italic 24px/20px 'Liberation Serif', serif; color: #d0d0d0; }
  .input { flex: 1; margin-left: 20px; justify-content: flex-end; padding-right: 4px; color: #c8c8c8; }

  /* sheet */
  .sheet { position: relative; height: 683px; display: flex; flex: none; overflow: hidden; }
  .vscroll { width: 21px; margin: 0 3px 0 2px; background: #141414; border-radius: 10px; display: flex; flex-direction: column; align-items: center; box-sizing: border-box; padding-top: 6px; }
  .vthumb { width: 11px; height: 469px; margin: 6px 0 181px; border-radius: 6px; background: #9c9c9c; }
  .up, .down { width: 0; border: 6px solid transparent; border-top: 0; border-bottom: 9px solid #9c9c9c; }
  .down { border-bottom: 0; border-top: 9px solid #9c9c9c; }
  .grid { background: #fff; color: #000; font: 18px/24px 'Liberation Sans', sans-serif; }
  .line { display: grid; grid-template-columns: 45px 112px 212px 175px 116px 147px 131px 112px 116px 112px 160px 89px 79px 164px 88px 36px; grid-template-rows: 23px; height: 23px; }
  .ch, .rh { height: 23px; background: #080808; color: #d6d6d6; text-align: center; box-sizing: border-box; padding-left: 2px; }
  .ch { border-right: 1px solid #5a5a5a; border-bottom: 1px solid #a0a0a0; line-height: 24px; }
  .ch.sel { background: #636363; color: #fff; border-bottom: 2px solid #107c41; }
  .corner { background: #080808; border-bottom: 1px solid #444; box-sizing: border-box; }
  .corner i { display: block; width: 14px; height: 14px; margin: 5px 0 0 3px; background: #777; clip-path: polygon(0 0, 0 100%, 100% 100%); }
  .rh { border-bottom: 1px solid #555; line-height: 25px; }
  .rh.sel { background: #636363; color: #fff; border-left: 2px solid #107c41; padding-left: 0; }
  .cell { box-sizing: border-box; height: 23px; border-right: 1px solid #e1e1e1; border-bottom: 1px solid #e1e1e1; display: flex; justify-content: flex-end; align-items: center; padding-right: 3px; min-width: 0; }
  .txt { height: 22px; }
  .bare { border-bottom-color: transparent; }
  .bare:not(.last), .fill { border-right-width: 0; padding-right: 4px; }
  .fill { background: #c0e4f5; border-bottom-color: #c0e4f5; }
  .rule { border-bottom-color: #45b0e1; }
  .bold, .head { font-weight: 700; }
  .cell.head { justify-content: flex-start; padding: 0 0 0 3px; }
  .cell.wide { padding-right: 9px; }
  .lvl0 { padding-right: 5px; }
  .lvl1 { padding-right: 25px; }
  .lvl2 { padding-right: 60px; }
  .cell .ar { font-size: 15px; position: relative; top: -1px; }
  .cell.bold .ar, .cell.head .ar { font-family: 'DejaVu Sans Condensed', 'DejaVu Sans', sans-serif; font-stretch: condensed; font-size: 14.2px; }
  .cell.head .ar { font-size: 13.1px; }
  .minus { width: 9px; height: 9px; margin: 3px 0 0 4px; border: 1px solid #8ea6c4; border-radius: 2px; background: linear-gradient(#4a5f8c, #4a5f8c) center / 7px 1px no-repeat, #e6e9f0; flex: none; }
  .filter { width: 19px; height: 19px; margin-right: auto; border: 1px solid #a6a6a6; background: #f8f8f8; display: flex; align-items: center; justify-content: center; color: #555; font: 15px/16px 'DejaVu Sans', sans-serif; flex: none; }
  .filter::before { content: ''; border: 4px solid transparent; border-top-color: #666; margin-top: 4px; }
  .filter.sorted::before { border-width: 3.5px; margin: 6px -2px 0 0; }
  .cursor { position: absolute; left: 1302px; top: 136px; width: 163px; height: 26px; box-sizing: border-box; border: 2px solid #107c41; }
  .cursor::after { content: ''; position: absolute; left: -2px; bottom: -2px; width: 4px; height: 4px; background: #107c41; border: solid #fff; border-width: 1px 1px 0 0; }

  .slicer { position: absolute; box-sizing: border-box; width: 240px; height: 324px; border: 1px solid #156082; background: #fff; color: #000; padding: 0 10px; }
  .one { left: 802px; top: 257px; }
  .two { left: 1090px; top: 255px; }
  .slicer-head { height: 33px; border-bottom: 1px solid #156082; display: flex; align-items: center; gap: 17px; padding-left: 3px; box-sizing: border-box; }
  .slicer-head b { margin-left: auto; font-size: 14.2px; font-family: 'DejaVu Sans Condensed', 'DejaVu Sans', sans-serif; font-stretch: condensed; padding-bottom: 3px; }
  .slicer-body { display: flex; gap: 4px; margin-top: 5px; }
  .slicer-items { flex: 1; display: flex; flex-direction: column; gap: 4px; }
  .slicer-item { box-sizing: border-box; height: 31px; border: 1px solid #9a9a9a; border-radius: 4px; background: #83ccec; text-align: right; padding-right: 10px; font-size: 14.6px; line-height: 28px; }
  .slicer-track { width: 22px; height: 274px; background: #f0f0f0; padding-top: 106px; box-sizing: border-box; margin-left: 1px; }
  .slicer-thumb { width: 8px; height: 145px; margin: 0 auto; background: #858585; }

  /* sheet tabs */
  .sheetbar { height: 40px; border-top: 1px solid #444; box-sizing: border-box; display: flex; align-items: flex-start; flex: none; font-size: 16px; }
  .hscroll { width: 720px; height: 21px; margin: 8px 0 0 23px; border-radius: 11px; background: #141414; display: flex; align-items: center; box-sizing: border-box; padding: 0 5px 0 6px; }
  .hscroll span { width: 21px; height: 11px; margin-left: auto; border-radius: 5px; background: #9c9c9c; }
  .hscroll i { border: 6px solid transparent; border-right: 9px solid #9c9c9c; border-left: 0; }
  .hscroll .r { border-left: 9px solid #9c9c9c; border-right: 0; margin-left: 6px; }
  .sheetbar .dots { margin: 13px 0 0 19px; }
  .plus { margin: 11px 0 0 377px; }
  .sheets { display: flex; margin-left: 53px; }
  .tsep { width: 1px; height: 24px; margin: 8px 5px 0 4.4px; background: #4a4a4a; }
  .tsep:first-child { margin-left: 0; margin-right: 4px; }
  .st { box-sizing: border-box; height: 30px; margin-top: 4px; border-radius: 6px; color: #111; text-align: center; line-height: 31px; }
  .active { width: 118px; height: 35px; margin-top: 0; border: 2px solid #fff; border-top: 0; border-radius: 0 0 6px 6px; background: linear-gradient(#fff, #f08a90); font-weight: 600; font-size: 16px; line-height: 32px; color: #222; }
  .active span { display: inline-block; height: 30px; border-bottom: 2px solid #107c41; line-height: 31px; letter-spacing: 0.15px; }
  .nocolor { width: 76px; color: #fff; }
  .orange { width: 67px; background: #e97132; }
  .pink { width: 110px; background: #e49edd; }
  .blue { width: 71px; background: #4a90d9; }
  .orange span, .blue span { font-size: 17px; }
  .green { width: 28px; background: #b8e6a0; }
  .purple { width: 30px; background: #782170; color: #fff; }
  .nav { margin: 10px 0 0 61px; }

  /* status bar */
  .status { height: 27px; background: #141414; border-top: 1px solid #3a3a3a; box-sizing: border-box; display: flex; align-items: center; padding-left: 15px; flex: none; font-size: 12.4px; }
  .ready { width: 60px; }
  .status b { margin-left: 3px; font-weight: 700; }
  .views { margin-left: auto; display: flex; }
  .views span { width: 50px; height: 26px; display: grid; place-items: center; }
  .views .on { background: #242424; }
  .zoom { margin-left: 6px; }
  .pc { width: 56px; padding-left: 14px; box-sizing: border-box; }

  /* taskbar */
  .taskbar { height: 60px; border-top: 1px solid #7a3a5e; box-sizing: border-box; display: flex; align-items: center; flex: none; background: linear-gradient(90deg, #780d45 0, #7d0d50 25%, #7a0d48 32%, #8c115a 55%, #8c1055 64%, #7c0d48 74%, #800e4c 85%, #760c42 100%); }
  .tray { width: 628px; display: flex; align-items: center; padding-left: 26px; box-sizing: border-box; }
  .clock, .lang, .temp { display: flex; flex-direction: column; line-height: 19px; font-size: 13px; font-family: 'Open Sans', 'DejaVu Sans', sans-serif; }
  .clock { width: 86px; margin-left: 10px; align-items: flex-start; }
  .tray :global(svg) { margin-right: 9px; }
  .tray > :global(svg:first-child) { margin-right: 0; }
  .lang { width: 34px; margin-left: 11px; align-items: center; margin-right: 23px; }
  .dock { display: flex; }
  .tile { position: relative; width: 55.1px; height: 50px; display: grid; place-items: center; }
  .open { background: linear-gradient(90deg, transparent 3px, #ffffff14 3px 52px, transparent 52px); }
  .open::after, .run::after { content: ''; position: absolute; bottom: 1px; width: 20px; height: 4px; border-radius: 2px; background: #ff84e0; }
  .run::after { width: 8px; background: #b87a9c; }
  .note, .alert { position: absolute; width: 20px; height: 20px; border-radius: 50%; text-align: center; color: #111; font: 13px/20px 'DejaVu Sans', sans-serif; }
  .note { left: 7px; top: 4px; background: #ff72d8; }
  .weather { position: relative; margin-left: auto; margin-right: 25px; display: flex; align-items: center; gap: 9px; }
  .temp { align-items: flex-end; }
  .sky { color: #d8b8c8; font-size: 14.5px; }
  .alert { right: -15px; top: -5px; background: #f0868e; }

  .mark { position: absolute; left: 839px; top: 940px; pointer-events: none; opacity: 0.52; }
  .mark-ar { font: bold 74px 'DejaVu Sans', sans-serif; fill: #a2a2a2; stroke: #a2a2a2; stroke-width: 3px; stroke-linejoin: round; }
  .mark-en { font: 37px 'Liberation Sans', sans-serif; fill: #c8a0b8; stroke: #c8a0b8; stroke-width: 0.8px; }
</style>
